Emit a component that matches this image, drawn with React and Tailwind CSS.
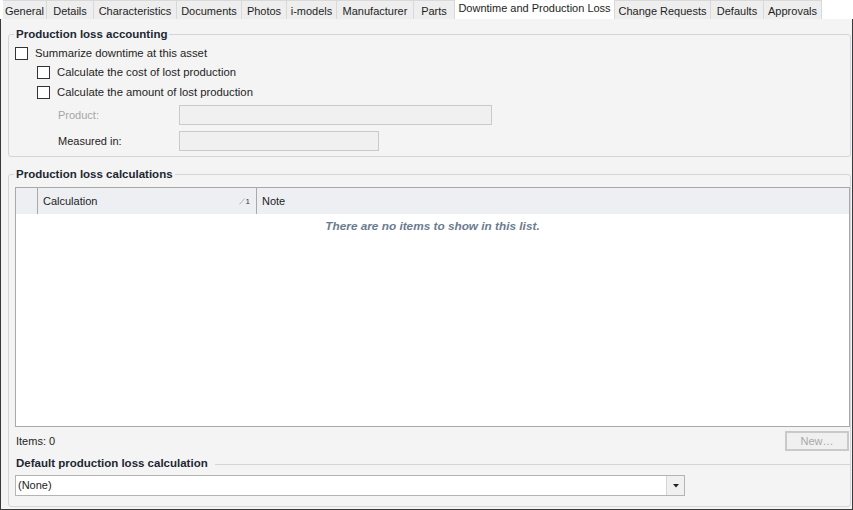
import React from "react";

const tabs = [
  { label: "General", w: "w-[44px]" },
  { label: "Details", w: "w-[47px]" },
  { label: "Characteristics", w: "w-[83px]" },
  { label: "Documents", w: "w-[65px]" },
  { label: "Photos", w: "w-[45px]" },
  { label: "i-models", w: "w-[50px]" },
  { label: "Manufacturer", w: "w-[77px]" },
  { label: "Parts", w: "w-[41px]" },
  { label: "Downtime and Production Loss", w: "w-[160px]", active: true },
  { label: "Change Requests", w: "w-[96px]" },
  { label: "Defaults", w: "w-[53px]" },
  { label: "Approvals", w: "w-[58px]" },
];

const CheckRow = ({ label, indent, h }) => (
  <div className={`flex items-center gap-[7px] ${h} ${indent ? "pl-[22px]" : "pl-0"}`}>
    <span className="w-[13px] h-[13px] border border-[#333] bg-white shrink-0" />
    <span className="text-[11.3px] whitespace-nowrap">{label}</span>
  </div>
);

const Legend = ({ children }) => (
  <legend className="-ml-[1px] px-[2px] font-bold text-[11.5px] text-[#1d2733] leading-[14px] whitespace-nowrap">
    {children}
  </legend>
);

export default function App() {
  return (
    <div
      className="w-[853px] h-[510px] flex flex-col bg-white text-[11px] text-[#1e1e1e] overflow-hidden"
      style={{ fontFamily: '"Liberation Sans", Arial, sans-serif' }}
    >
      {/* tab strip */}
      <div className="flex h-[19px] pl-[3px] shrink-0">
        {tabs.map((t) =>
          t.active ? (
            <div key={t.label} className={`${t.w} h-[19px] bg-white flex items-start justify-center pt-[1px] leading-[14px] border-r border-[#d9d9d9] whitespace-nowrap`}>
              {t.label}
            </div>
          ) : (
            <div key={t.label} className={`${t.w} h-[19px] bg-[#eeeeee] border-r border-t border-[#d9d9d9] flex items-center justify-center leading-[14px] pt-[1px] whitespace-nowrap`}>
              {t.label}
            </div>
          )
        )}
      </div>

      {/* panel */}
      <div className="flex-1 bg-[#f4f4f4] border-l border-r border-b border-[#3a3a3a] flex flex-col pl-[7px] pr-[1px]">
        {/* Production loss accounting */}
        <fieldset className="mt-[8px] border border-[#d2d6db] rounded-[3px] pl-[6px] pb-[5px]">
          <Legend>Production loss accounting</Legend>
          <div className="mt-[2px]">
            <CheckRow label="Summarize downtime at this asset" h="h-[20px]" />
            <CheckRow label="Calculate the cost of lost production" indent h="h-[19px]" />
            <CheckRow label="Calculate the amount of lost production" indent h="h-[20px]" />
            <div className="flex flex-col gap-[6px] mt-[3px] pl-[43px]">
              <div className="flex items-center h-[20px]">
                <span className="w-[121px] text-[#a6a6a6]">Product:</span>
                <div className="w-[313px] h-[20px] bg-[#f0f0f0] border border-[#cacaca]" />
              </div>
              <div className="flex items-center h-[20px]">
                <span className="w-[121px]">Measured in:</span>
                <div className="w-[200px] h-[20px] bg-[#f0f0f0] border border-[#cacaca]" />
              </div>
            </div>
          </div>
        </fieldset>

        {/* Production loss calculations */}
        <fieldset className="mt-[10px] border border-[#d2d6db] rounded-[3px] pl-[6px] pb-[9px] flex-1 flex flex-col min-h-0">
          <Legend>Production loss calculations</Legend>
          <div className="mt-[6px] h-[240px] border border-[#a9a9a9] bg-white flex flex-col">
            <div className="flex h-[26px] bg-[#edeff3] shrink-0">
              <div className="w-[22px] border-r border-[#a9a9a9]" />
              <div className="w-[219px] border-r border-[#a9a9a9] flex items-center pl-[5px] pr-[6px]">
                <span className="flex-1">Calculation</span>
                <span className="flex items-end leading-none">
                  <svg width="6" height="7" viewBox="0 0 6 7">
                    <path d="M0.5 6.5 L5.5 0.5" stroke="#b5b5b5" strokeWidth="1" fill="none" />
                  </svg>
                  <span className="text-[8px] text-[#333] ml-[1px] translate-y-[1px]">1</span>
                </span>
              </div>
              <div className="flex-1 flex items-center pl-[5px]">Note</div>
            </div>
            <div className="text-center font-bold italic text-[11.8px] text-[#6b7b8f] mt-[5px] leading-[14px]">
              There are no items to show in this list.
            </div>
          </div>

          <div className="flex items-center justify-between h-[20px] mt-[4px] pl-[1px]">
            <span>Items: 0</span>
            <div className="w-[64px] h-[20px] border-2 border-[#c9c9c9] bg-[#f0f0f0] flex items-center justify-center text-[#a8a8a8] mr-[1px]">
              New…
            </div>
          </div>

          <div className="flex items-center mt-[6px] h-[14px] gap-[7px]">
            <span className="font-bold text-[11.5px] text-[#1d2733] pl-[1px] whitespace-nowrap">Default production loss calculation</span>
            <div className="flex-1 border-t border-[#d2d6db]" />
          </div>

          <div className="mt-[4px] w-[670px] h-[21px] bg-white border border-[#b4b4b4] flex items-center">
            <span className="flex-1 pl-[2px]">(None)</span>
            <div className="w-[18px] h-full bg-[#f0f0f0] border-l border-[#d4d4d4] flex items-center justify-center">
              <svg width="6" height="4" viewBox="0 0 6 4">
                <path d="M0 0 H6 L3 3.5 Z" fill="#222" />
              </svg>
            </div>
          </div>
        </fieldset>
        <div className="h-[2px]" />
      </div>
    </div>
  );
}
